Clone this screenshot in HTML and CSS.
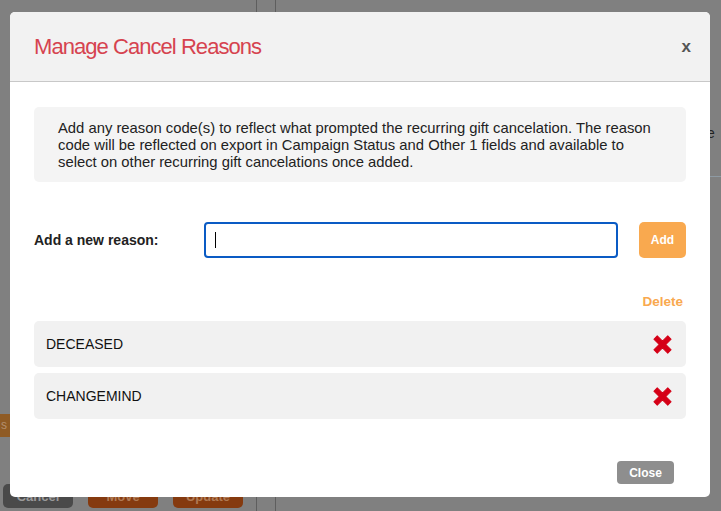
FILE: index.html
```html
<!DOCTYPE html>
<html lang="en">

<head>
    <meta charset="UTF-8" />
    <meta name="viewport" content="width=device-width, initial-scale=1.0" />
    <title>Manage Cancel Reasons</title>
    <link rel="stylesheet" href="styles.css">
</head>

<body>
    <!-- page behind the modal (already dimmed) -->
    <div class="page">
        <div class="col-left">
            <div class="side-tab">s</div>
            <div class="bottom-actions">
                <button class="bg-btn cancel">Cancel</button>
                <button class="bg-btn move">Move</button>
                <button class="bg-btn update">Update</button>
            </div>
        </div>
        <div class="col-mid"></div>
        <div class="col-right">
            <div class="right-text">e</div>
            <div class="right-line"></div>
        </div>
    </div>

    <div class="overlay">
        <div class="modal">
            <div class="modal-header">
                <h3>Manage Cancel Reasons</h3>
                <span class="close-x">x</span>
            </div>

            <div class="modal-body">
                <div class="info">
                    Add any reason code(s) to reflect what prompted the recurring gift cancelation. The reason
                    code will be reflected on export in Campaign Status and Other 1 fields and available to
                    select on other recurring gift cancelations once added.
                </div>

                <form class="add-row">
                    <label for="reason">Add a new reason:</label>
                    <div class="input-wrap">
                        <input type="text" id="reason" />
                        <span class="caret"></span>
                    </div>
                    <button type="submit" class="btn-add">Add</button>
                </form>

                <div class="delete-head">Delete</div>

                <ul class="reasons">
                    <li>
                        <span>DECEASED</span>
                        <svg class="del-icon" viewBox="0 0 20 20" width="21" height="21">
                            <path d="M1.8 5 L5 1.8 L10 6.8 L15 1.8 L18.2 5 L13.2 10 L18.2 15 L15 18.2 L10 13.2 L5 18.2 L1.8 15 L6.8 10 Z" fill="#d50017" stroke="#d50017" stroke-width="1" stroke-linejoin="round" />
                        </svg>
                    </li>
                    <li>
                        <span>CHANGEMIND</span>
                        <svg class="del-icon" viewBox="0 0 20 20" width="21" height="21">
                            <path d="M1.8 5 L5 1.8 L10 6.8 L15 1.8 L18.2 5 L13.2 10 L18.2 15 L15 18.2 L10 13.2 L5 18.2 L1.8 15 L6.8 10 Z" fill="#d50017" stroke="#d50017" stroke-width="1" stroke-linejoin="round" />
                        </svg>
                    </li>
                </ul>
            </div>

            <div class="modal-footer">
                <button class="btn-close">Close</button>
            </div>
        </div>
    </div>
</body>

</html>
```

FILE: styles.css
```css
* {
    box-sizing: border-box;
}

body {
    margin: 0;
    width: 721px;
    height: 511px;
    overflow: hidden;
    background: #808080;
    font-family: 'Liberation Sans', Arial, Helvetica, sans-serif;
}

/* dimmed page underneath */
.page {
    display: flex;
    height: 511px;
}

.col-left {
    width: 257px;
    border-right: 1px solid #5e5e5e;
    display: flex;
    flex-direction: column;
    justify-content: flex-end;
    padding-bottom: 3px;
}

.side-tab {
    width: 10px;
    height: 23px;
    background: #8f5b25;
    color: #b49070;
    font-size: 12px;
    line-height: 23px;
    padding-left: 1px;
    margin-bottom: 47px;
}

.bottom-actions {
    display: flex;
    gap: 15px;
    padding-left: 3px;
}

.bg-btn {
    width: 70px;
    height: 24px;
    border: none;
    border-radius: 5px;
    font-family: inherit;
    font-size: 13px;
    font-weight: bold;
    color: #9a9a9a;
}

.bg-btn.cancel {
    background: #4a4a4a;
}

.bg-btn.move,
.bg-btn.update {
    background: #853a0f;
    color: #b07a55;
}

.col-mid {
    width: 19px;
    border-right: 1px solid #5e5e5e;
}

.col-right {
    flex: 1;
    padding-top: 125px;
}

.right-text {
    padding-left: 431px;
    font-size: 14px;
    color: #222;
    height: 51px;
}

.right-line {
    border-top: 1px solid #8e9aa3;
}

/* modal */
.overlay {
    position: absolute;
    left: 10px;
    top: 12px;
}

.modal {
    width: 700px;
    height: 485px;
    background: #fff;
    border-radius: 5px;
    overflow: hidden;
    display: flex;
    flex-direction: column;
}

.modal-header {
    height: 70px;
    background: #f2f2f2;
    border-bottom: 1px solid #c8c8c8;
    display: flex;
    align-items: center;
    justify-content: space-between;
    padding: 0 19px 0 24px;
}

.modal-header h3 {
    margin: 0;
    font-size: 22px;
    font-weight: normal;
    letter-spacing: -0.95px;
    color: #d6434f;
}

.close-x {
    font-size: 17px;
    font-weight: bold;
    color: #555;
}

.modal-body {
    flex: 1;
    padding: 25px 24px 0;
}

.info {
    background: #f4f4f4;
    border-radius: 5px;
    padding: 13px 20px 11px 24px;
    font-size: 14.8px;
    line-height: 17px;
    color: #222;
}

.add-row {
    display: flex;
    align-items: center;
    margin-top: 40px;
}

.add-row label {
    width: 170px;
    font-size: 14px;
    font-weight: bold;
    color: #222;
}

.input-wrap {
    position: relative;
}

.add-row input {
    display: block;
    width: 414px;
    height: 36px;
    border: 2px solid #0a5bc4;
    border-radius: 4px;
    outline: none;
    padding: 0 10px;
    font-size: 14px;
}

.caret {
    position: absolute;
    left: 11px;
    top: 10px;
    width: 1px;
    height: 16px;
    background: #000;
}

.btn-add {
    margin-left: 21px;
    width: 47px;
    height: 36px;
    background: #f9a94f;
    color: #fff;
    border: none;
    border-radius: 5px;
    font-family: inherit;
    font-size: 12px;
    font-weight: bold;
}

.delete-head {
    text-align: right;
    padding-right: 3px;
    margin-top: 36px;
    font-size: 13.5px;
    font-weight: bold;
    color: #f9a94f;
    line-height: 16px;
}

.reasons {
    list-style: none;
    margin: 11px 0 0;
    padding: 0;
    display: flex;
    flex-direction: column;
    gap: 6px;
}

.reasons li {
    height: 46px;
    background: #f1f1f1;
    border-radius: 5px;
    display: flex;
    align-items: center;
    justify-content: space-between;
    padding: 0 13px 0 12px;
    font-size: 14px;
    color: #111;
}

.modal-footer {
    display: flex;
    justify-content: flex-end;
    padding: 0 36px 13px;
}

.btn-close {
    width: 57px;
    height: 23px;
    background: #8e8e8e;
    color: #fff;
    border: none;
    border-radius: 4px;
    font-family: inherit;
    font-size: 12px;
    font-weight: bold;
}
```
